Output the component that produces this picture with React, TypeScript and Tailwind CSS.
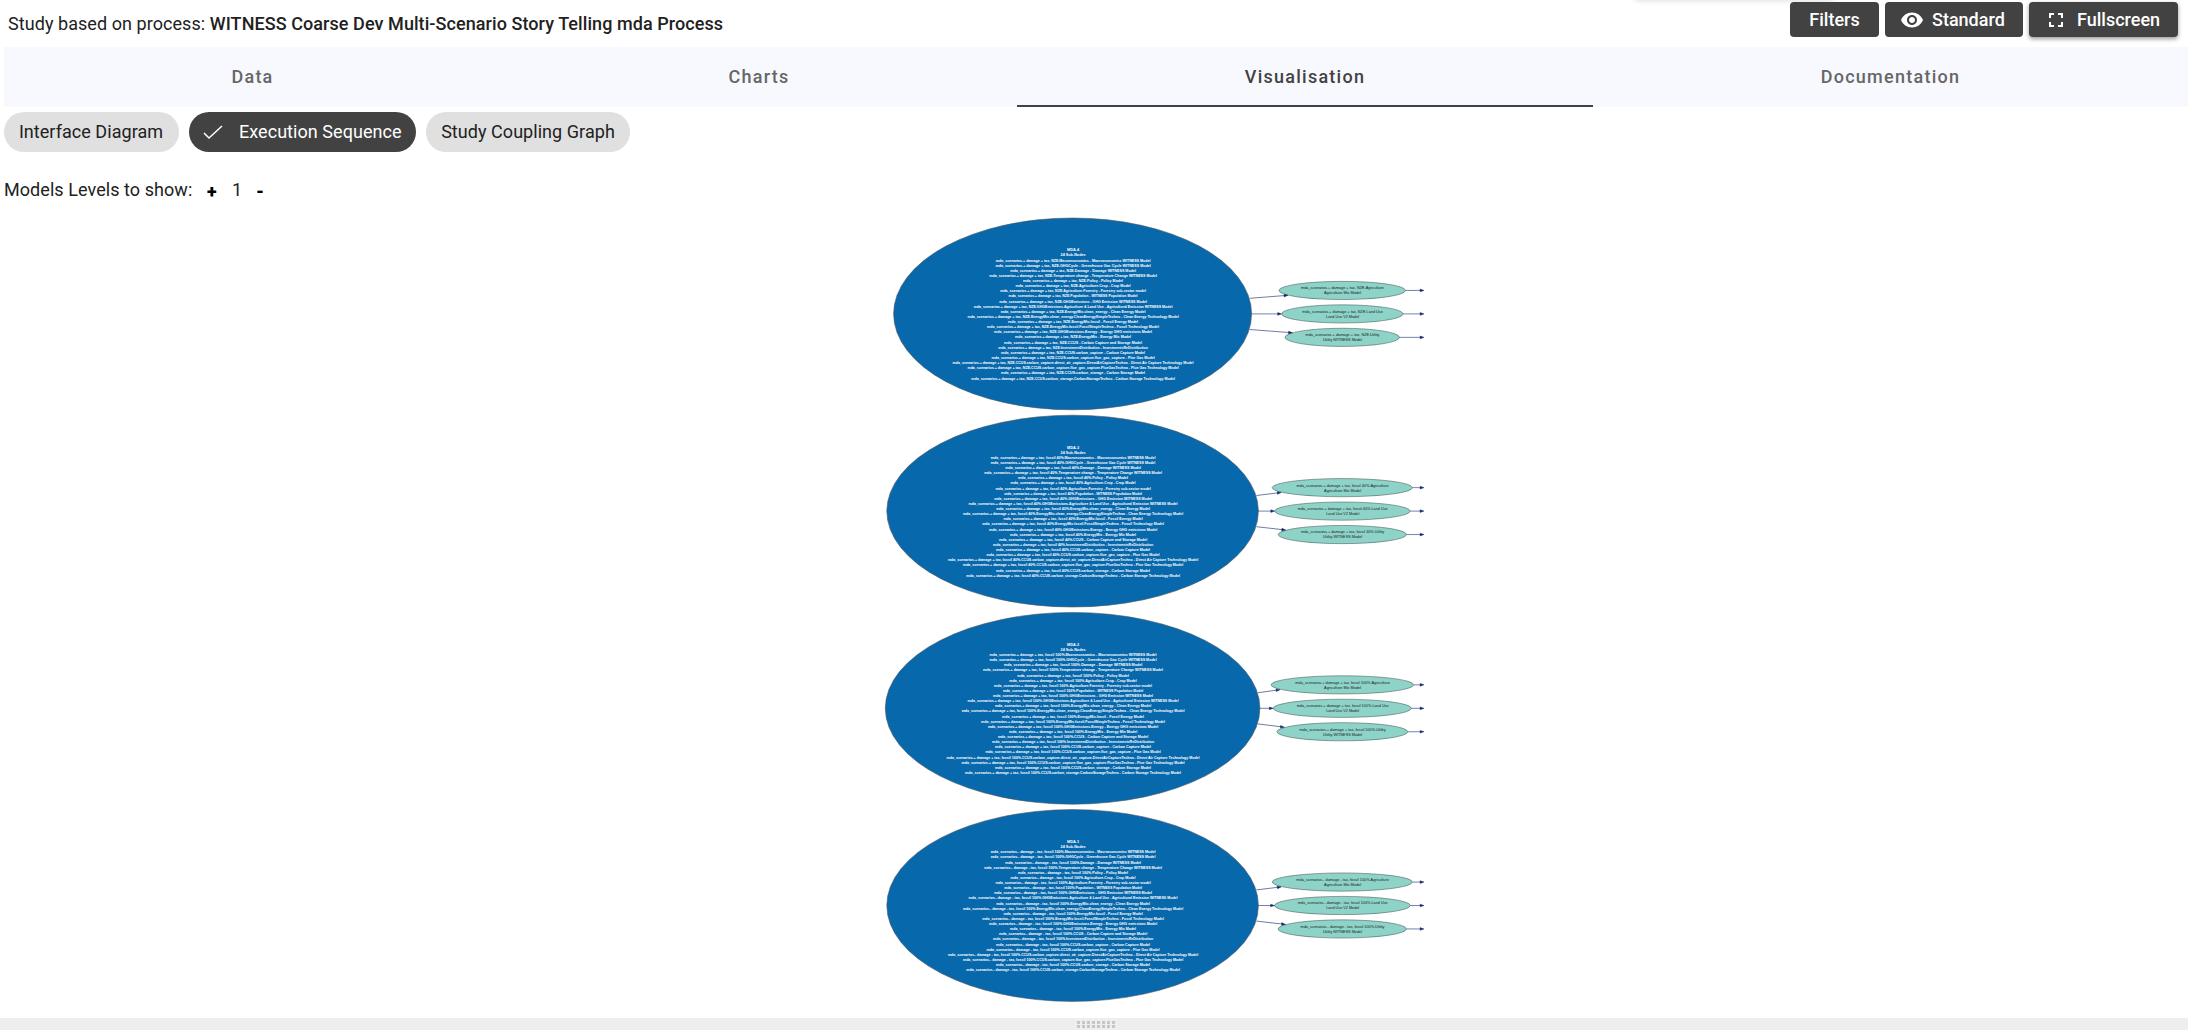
import React from "react";
import { MdFullscreen, MdVisibility } from "react-icons/md";

type Child = { left: number; right: number; name: string; model: string; width: number; modelWidth: number };
type Cluster = {
  title: string;
  prefix: string;
  cy: number;
  rx: number;
  firstLine: number;
  children: Child[];
  widths: number[];
};

const models = [
  "Macroeconomics - Macroeconomics WITNESS Model",
  "GHGCycle - Greenhouse Gas Cycle WITNESS Model",
  "Damage - Damage WITNESS Model",
  "Temperature change - Temperature Change WITNESS Model",
  "Policy - Policy Model",
  "Agriculture.Crop - Crop Model",
  "Agriculture.Forestry - Forestry sub-sector model",
  "Population - WITNESS Population Model",
  "GHGEmissions - GHG Emission WITNESS Model",
  "GHGEmissions.Agriculture & Land Use - Agricultural Emission WITNESS Model",
  "EnergyMix.clean_energy - Clean Energy Model",
  "EnergyMix.clean_energy.CleanEnergySimpleTechno - Clean Energy Technology Model",
  "EnergyMix.fossil - Fossil Energy Model",
  "EnergyMix.fossil.FossilSimpleTechno - Fossil Technology Model",
  "GHGEmissions.Energy - Energy GHG emissions Model",
  "EnergyMix - Energy Mix Model",
  "CCUS - Carbon Capture and Storage Model",
  "InvestmentDistribution - InvestmentsReDistribution",
  "CCUS.carbon_capture - Carbon Capture Model",
  "CCUS.carbon_capture.flue_gas_capture - Flue Gas Model",
  "CCUS.carbon_capture.direct_air_capture.DirectAirCaptureTechno - Direct Air Capture Technology Model",
  "CCUS.carbon_capture.flue_gas_capture.FlueGasTechno - Flue Gas Technology Model",
  "CCUS.carbon_storage - Carbon Storage Model",
  "CCUS.carbon_storage.CarbonStorageTechno - Carbon Storage Technology Model",
];

const nzeWidths = [
  154.7, 155.3, 125.7, 167.7, 100, 115, 145.7, 129, 147.7, 198.7, 144.7, 211.3, 130, 172, 158, 116, 138, 149.7, 144, 163.3,
  241, 211.3, 144, 203.7,
];
const fossil40Widths = [
  164.6, 164.6, 135.7, 177.9, 110, 125, 155.4, 137.9, 157.9, 209, 153.9, 220.3, 139.3, 181.8, 168.2, 126, 148.2, 160, 154,
  173, 250.3, 220.3, 154, 213.6,
];
const fossil100Widths = [
  167, 167.1, 138.2, 180, 111.8, 127.5, 158, 140.4, 160, 211, 156.4, 222.9, 142, 184, 170.4, 128.2, 150.4, 162, 156, 175.4,
  253, 223, 156, 216,
];

const clusters: Cluster[] = [
  {
    title: "MDA.4", prefix: "mda_scenarios.+ damage + tax, NZE.", cy: 313.9, rx: 179, firstLine: 251.32, widths: nzeWidths,
    children: [
      { left: 1279, right: 1405.4, name: "Agriculture", model: "Agriculture Mix Model", width: 83, modelWidth: 37 },
      { left: 1281.6, right: 1403, name: "Land Use", model: "Land Use V2 Model", width: 80.5, modelWidth: 33 },
      { left: 1285, right: 1399.4, name: "Utility", model: "Utility WITNESS Model", width: 74, modelWidth: 39 },
    ],
  },
  {
    title: "MDA.3", prefix: "mda_scenarios.+ damage + tax, fossil 40%.", cy: 511.1, rx: 185.8, firstLine: 448.54, widths: fossil40Widths,
    children: [
      { left: 1272.2, right: 1412.4, name: "Agriculture", model: "Agriculture Mix Model", width: 92, modelWidth: 37 },
      { left: 1274.7, right: 1410.2, name: "Land Use", model: "Land Use V2 Model", width: 90, modelWidth: 33 },
      { left: 1278.2, right: 1406.4, name: "Utility", model: "Utility WITNESS Model", width: 83, modelWidth: 39 },
    ],
  },
  {
    title: "MDA.2", prefix: "mda_scenarios.+ damage + tax, fossil 100%.", cy: 708.3, rx: 187.3, firstLine: 645.76, widths: fossil100Widths,
    children: [
      { left: 1271, right: 1413.6, name: "Agriculture", model: "Agriculture Mix Model", width: 94.5, modelWidth: 37 },
      { left: 1273.3, right: 1411.4, name: "Land Use", model: "Land Use V2 Model", width: 92, modelWidth: 33 },
      { left: 1276.9, right: 1407.7, name: "Utility", model: "Utility WITNESS Model", width: 86, modelWidth: 39 },
    ],
  },
  {
    title: "MDA.1", prefix: "mda_scenarios.- damage - tax, fossil 100%.", cy: 905.5, rx: 185.8, firstLine: 842.99, widths: fossil40Widths,
    children: [
      { left: 1272.2, right: 1412.4, name: "Agriculture", model: "Agriculture Mix Model", width: 92.5, modelWidth: 37 },
      { left: 1274.5, right: 1410.3, name: "Land Use", model: "Land Use V2 Model", width: 90, modelWidth: 33 },
      { left: 1278, right: 1406.4, name: "Utility", model: "Utility WITNESS Model", width: 84, modelWidth: 39 },
    ],
  },
];

function Arrow({ x1, y1, x2, y2 }: { x1: number; y1: number; x2: number; y2: number }) {
  const angle = (Math.atan2(y2 - y1, x2 - x1) * 180) / Math.PI;
  const length = Math.hypot(x2 - x1, y2 - y1);
  return (
    <g transform={`translate(${x1} ${y1}) rotate(${angle})`}>
      <line x1={0} y1={0} x2={length - 3.5} y2={0} stroke="#1a2f6c" strokeWidth={0.6} />
      <polygon points={`${length},0 ${length - 3.9},-1.35 ${length - 3.9},1.35`} fill="#0e2464" stroke="#0e2464" strokeWidth={0.4} />
    </g>
  );
}

function ClusterGraph({ cluster }: { cluster: Cluster }) {
  const { cy, rx } = cluster;
  const cx = 1072.6;
  const centre = 1073.1;
  const edge = cx + rx;
  const lineY = (i: number) => Math.round(cluster.firstLine + i * 5.128) - 0.4;
  return (
    <g>
      <ellipse cx={cx} cy={cy} rx={rx} ry={95.9} fill="#0868ac" stroke="#4b5560" strokeWidth={0.6} />
      <g fill="#ffffff" fontSize={4.3} fontWeight={700} textAnchor="middle">
        <text x={centre} y={lineY(0)} textLength={12} lengthAdjust="spacingAndGlyphs">{cluster.title}</text>
        <text x={centre} y={lineY(1)} textLength={25} lengthAdjust="spacingAndGlyphs">24 Sub-Nodes</text>
        {models.map((model, i) => (
          <text key={model} x={centre} y={lineY(i + 2)} textLength={cluster.widths[i]} lengthAdjust="spacingAndGlyphs">
            {cluster.prefix + model}
          </text>
        ))}
      </g>
      {cluster.children.map((child, i) => {
        const y = cy + (i - 1) * 23.45;
        const mid = (child.left + child.right) / 2;
        const top = Math.round(y - 1.1) - 0.2;
        return (
          <g key={child.name}>
            <ellipse cx={mid} cy={y} rx={(child.right - child.left) / 2} ry={9.1} fill="#8dd3c7" stroke="#3f4a48" strokeWidth={0.5} />
            <g fill="#1a1a1a" fontSize={4.3} textAnchor="middle">
              <text x={mid + 0.3} y={top} textLength={child.width} lengthAdjust="spacingAndGlyphs">{cluster.prefix + child.name}</text>
              <text x={mid + 0.3} y={top + 5} textLength={child.modelWidth} lengthAdjust="spacingAndGlyphs">{child.model}</text>
            </g>
            <Arrow x1={child.right} y1={y} x2={1424} y2={y} />
          </g>
        );
      })}
      <Arrow x1={edge - 2} y1={cy - 15.6} x2={cluster.children[0].left + 9} y2={cy - 18.6} />
      <Arrow x1={edge} y1={cy} x2={cluster.children[1].left} y2={cy} />
      <Arrow x1={edge - 2} y1={cy + 15.6} x2={cluster.children[2].left + 7.5} y2={cy + 18.9} />
    </g>
  );
}

export default function App() {
  return (
    <div className="flex h-[1030px] w-[2188px] flex-col overflow-hidden bg-white font-[Roboto,sans-serif] text-[18px] text-[#212121]">
      <header className="relative flex h-[47px] shrink-0 items-start justify-between pr-[10px] pl-2">
        <div className="absolute -top-5 left-[1634px] h-5 w-[200px] rounded shadow-[0_1px_5px_rgba(0,0,0,0.12)]" />
        <p className="mt-[10px] leading-7 tracking-[0.06px] whitespace-nowrap">
          Study based on process:{" "}
          <span className="font-medium tracking-[0.07px]">WITNESS Coarse Dev Multi-Scenario Story Telling mda Process</span>
        </p>
        <div className="z-10 mt-[2px] flex gap-1.5 font-medium text-white">
          <button className="h-[35px] w-[89px] rounded-[4px] bg-[#424242]">Filters</button>
          <button className="flex h-[35px] w-[138px] items-center rounded-[4px] bg-[#424242] pl-[15px]">
            <MdVisibility className="mr-[8px] size-[24px]" />
            Standard
          </button>
          <button className="flex h-[35px] w-[149px] items-center rounded-[4px] bg-[#424242] pl-[15px] shadow-[0_2px_4px_rgba(0,0,0,0.4)]">
            <MdFullscreen className="mr-[9px] size-[24px]" />
            Fullscreen
          </button>
        </div>
      </header>

      <nav className="ml-1 flex h-[60px] shrink-0 bg-[#f8f9ff] font-medium tracking-[1.25px] text-[#666666]">
        <div className="flex w-[495px] items-center justify-center pb-0.5 pl-[2px]">Data</div>
        <div className="flex w-[518px] items-center justify-center pb-0.5 pl-[2px]">Charts</div>
        <div className="flex w-[576px] items-center justify-center border-b-2 border-[#424242] text-[#424242]">Visualisation</div>
        <div className="flex w-[595px] items-center justify-center pb-0.5">Documentation</div>
      </nav>

      <div className="mt-[5px] ml-1 flex h-10 shrink-0 gap-[10px]">
        <button className="w-[175px] rounded-full bg-[#e0e0e0] pr-px pb-0.5 tracking-[0.05px]">Interface Diagram</button>
        <button className="flex w-[227px] items-center rounded-full bg-[#424242] pl-[14px] text-white">
          <svg viewBox="0 0 20 20" className="mr-[16px] size-5" fill="none" stroke="currentColor" strokeWidth="1.5">
            <path d="M1 11l5 5L19 4" />
          </svg>
          <span className="pb-0.5 tracking-[0.05px]">Execution Sequence</span>
        </button>
        <button className="w-[204px] rounded-full bg-[#e0e0e0] pb-0.5 tracking-[0.05px]">Study Coupling Graph</button>
      </div>

      <div className="mt-6 ml-1 flex h-7 shrink-0 items-center leading-7">
        <span className="w-[203px] tracking-[0.06px]">Models Levels to show:</span>
        <button className="w-[25px] pt-1 text-left font-black text-black">+</button>
        <span className="w-[24px]">1</span>
        <button className="pt-1 font-black text-black">-</button>
      </div>

      <main className="min-h-0 flex-1">
        <svg viewBox="0 204 2188 814" width="2188" height="814" className="block" fontFamily='"Liberation Sans", Arial, sans-serif'>
          {clusters.map((cluster) => (
            <ClusterGraph key={cluster.title} cluster={cluster} />
          ))}
        </svg>
      </main>

      <footer className="flex h-3 shrink-0 items-center justify-center bg-[#eeeeee]">
        <div className="grid grid-cols-8 gap-x-[2px] gap-y-px pl-1">
          {Array.from({ length: 16 }, (_, i) => (
            <span key={i} className="h-[3px] w-[3px] bg-[#c6c6c6]" />
          ))}
        </div>
      </footer>
    </div>
  );
}
